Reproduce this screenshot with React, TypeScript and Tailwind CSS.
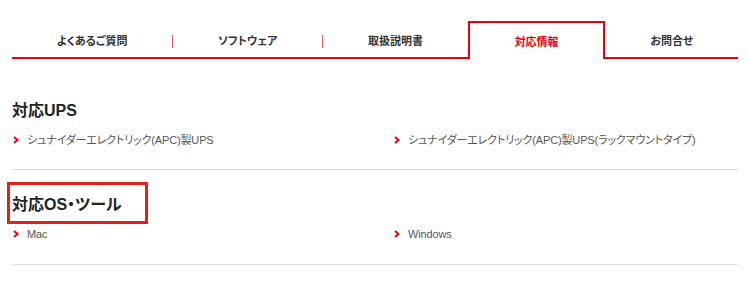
import React from "react";

const tabs = ["よくあるご質問", "ソフトウェア", "取扱説明書", "対応情報", "お問合せ"];
const activeIndex = 3;

interface Section {
  title: string;
  links: string[];
  marked?: boolean;
}

const sections: Section[] = [
  {
    title: "対応UPS",
    links: [
      "シュナイダーエレクトリック(APC)製UPS",
      "シュナイダーエレクトリック(APC)製UPS(ラックマウントタイプ)",
    ],
  },
  {
    title: "対応OS・ツール",
    links: ["Mac", "Windows"],
    marked: true,
  },
];

function Chevron() {
  return (
    <svg className="w-[6px] h-[8px] shrink-0" viewBox="0 0 6 8" fill="none">
      <polyline
        points="1,1 4.5,4 1,7"
        stroke="#e60012"
        strokeWidth={2}
        strokeLinejoin="miter"
      />
    </svg>
  );
}

export default function App() {
  return (
    <div
      className="w-[750px] h-[281px] bg-white px-3 overflow-hidden [font-feature-settings:'palt']"
      style={{ fontFamily: '"Liberation Sans", "Noto Sans CJK JP", sans-serif' }}
    >
      {/* タブ */}
      <div className="mt-[21px] flex border-b-2 border-[#e60012]">
        {tabs.map((tab, i) => {
          const active = i === activeIndex;
          const showSep =
            i < tabs.length - 1 && i !== activeIndex && i + 1 !== activeIndex;
          return (
            <React.Fragment key={tab}>
              <div
                className={
                  active
                    ? "relative -mb-[2px] flex-auto h-[38px] flex items-center justify-center pt-[3px] bg-white border-2 border-b-0 border-[#e60012] text-[11px] font-bold text-[#e60012]"
                    : "flex-auto h-[36px] flex items-center justify-center pt-[5px] text-[11px] font-bold text-[#333]"
                }
              >
                {tab}
              </div>
              {showSep && (
                <div className="w-px h-[13px] self-center mt-[5px] bg-[#e8585f]" />
              )}
            </React.Fragment>
          );
        })}
      </div>

      <div className="mt-[18px]">
        {sections.map((s, idx) => (
          <section
            key={s.title}
            className={
              idx === 0
                ? "pt-[22px] pb-[21px] border-b border-[#dedede]"
                : "pt-[23px] pb-[22px] border-b border-[#dedede]"
            }
          >
            <div className="relative">
              <h2 className="text-[16px] leading-[24px] font-bold text-[#222]">{s.title}</h2>
              {s.marked && (
                <div className="absolute -left-[5px] -top-[11px] w-[141px] h-[42px] border-[3px] border-[#e1221c]" />
              )}
            </div>
            <ul className="mt-[9px] grid grid-cols-[381px_1fr]">
              {s.links.map((l) => (
                <li
                  key={l}
                  className="flex items-center gap-[8px] pl-px text-[11px] leading-[16px] tracking-[-0.15px] text-[#555]"
                >
                  <Chevron />
                  <span>{l}</span>
                </li>
              ))}
            </ul>
          </section>
        ))}
      </div>
    </div>
  );
}
